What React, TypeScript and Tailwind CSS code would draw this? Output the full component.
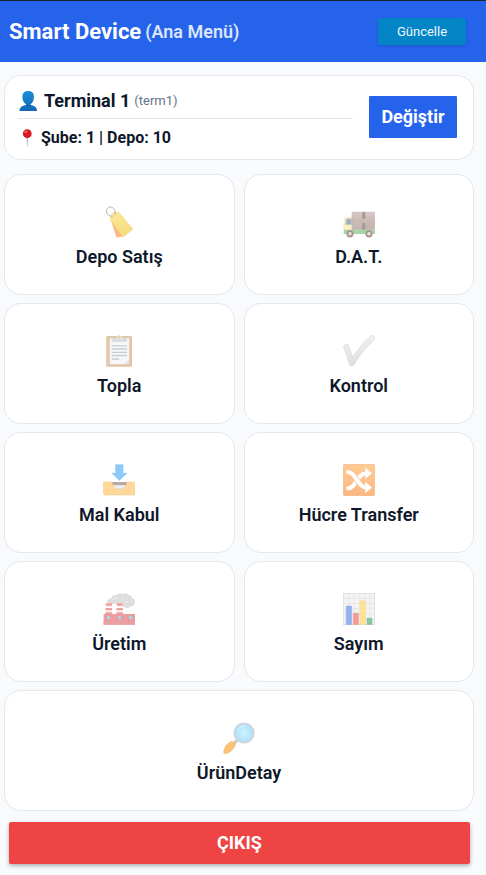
import type { ReactNode } from "react";

function Icon({ children, className = "h-8 w-8" }: { children: ReactNode; className?: string }) {
  return (
    <svg viewBox="0 0 32 32" className={`${className} shrink-0`} fill="none" aria-hidden="true">
      {children}
    </svg>
  );
}

const TagIcon = () => (
  <Icon>
    <defs>
      <linearGradient id="tag" x1="0" y1="0" x2="0" y2="1">
        <stop stopColor="#fbe794" />
        <stop offset="1" stopColor="#f6db7f" />
      </linearGradient>
    </defs>
    <path d="M7.5 13 13.5 31.5 19.5 30.5 16 20Z" fill="#fbb983" />
    <path d="M7 12.5 8.8 8Q9.5 6.8 11 6.6L14.5 6.3Q16 6.3 17 7.5L30 23.2 20.2 31 7.6 14.5Q7 13.5 7 12.5Z" fill="url(#tag)" stroke="#f1d58b" strokeWidth=".5" />
    <circle cx="10.5" cy="9.7" r="1.1" fill="#fff5ca" />
    <path d="M10.3 10C6 10.8 3.2 8 3.5 4.8 3.8 1.3 7.5-.3 10.2 2c2.3 2 2.6 5.2 1.2 7.5" stroke="#b8aaa3" strokeWidth=".9" />
  </Icon>
);

const TruckIcon = () => (
  <Icon>
    <defs>
      <linearGradient id="cargo" x1="0" y1="0" x2="0" y2="1">
        <stop stopColor="#d8cac7" />
        <stop offset=".45" stopColor="#cabbb7" />
        <stop offset="1" stopColor="#c5b5b1" />
      </linearGradient>
    </defs>
    <path d="M.7 23.5H32V28H.7Z" fill="#a4d7a7" />
    <path d="M.8 23.5V18.5L2.4 11.5H9V23.5Z" fill="#fff0bf" stroke="#e8dab1" strokeWidth=".5" />
    <path d="M3.6 13H8.3V18.5H2.8Z" fill="#9dafb9" stroke="#b6c4cb" strokeWidth=".8" />
    <path d="M9 6.2H31.8V23.5H9Z" fill="url(#cargo)" stroke="#bdaea9" strokeWidth=".5" />
    <path d="M19.3 6.2H22.2V12.8H19.3ZM19.3 17H22.2V23.5H19.3Z" fill="#a79692" />
    <circle cx="7" cy="27.8" r="3.6" fill="#a9928d" />
    <circle cx="7" cy="27.8" r="1.8" fill="#e5e3e3" />
    <circle cx="26" cy="27.8" r="3.6" fill="#a9928d" />
    <circle cx="26" cy="27.8" r="1.8" fill="#e5e3e3" />
  </Icon>
);

const ClipboardIcon = () => (
  <Icon>
    <rect x="3.2" y="1" width="25.8" height="30.7" rx="1.4" fill="#dfc3a4" />
    <rect x="4.5" y="2" width="23.2" height="28.5" rx="1" fill="#e7ccb0" />
    <path d="M7 3.5H26V24.5L22 29H7Z" fill="#f5f7f8" />
    <path d="M26 24.5 22 29H26Z" fill="#e1e3e4" />
    <path d="M8.8 3H24V7H8.8Z" fill="#d8dcdf" />
    <path d="M13 3.5Q14 3 14.4 1.4 15 0 16.4 0T18.5 1.4Q18.8 3 20 3.5V4H13Z" fill="#e5e6e7" />
    <circle cx="16.4" cy="2.5" r="1.1" fill="#e6b997" />
    <path d="M8.8 10.8H24M8.8 14H24M8.8 17.3H24M8.8 20.5H24M8.8 24H16" stroke="#c9ccce" strokeWidth="1.3" />
  </Icon>
);

const CheckIcon = () => (
  <Icon>
    <defs>
      <linearGradient id="check" x1="0" y1="0" x2="0" y2="32" gradientUnits="userSpaceOnUse">
        <stop stopColor="#f0f0f0" />
        <stop offset="1" stopColor="#dedede" />
      </linearGradient>
    </defs>
    <path d="M3.3 12 9 28.2C14 19 21 11 29.3 3" stroke="#d8d8d8" strokeWidth="5.8" strokeLinecap="round" strokeLinejoin="round" />
    <path d="M3.3 12 9 28.2C14 19 21 11 29.3 3" stroke="url(#check)" strokeWidth="5" strokeLinecap="round" strokeLinejoin="round" />
  </Icon>
);

const InboxIcon = () => (
  <Icon>
    <path d="M12.6.7H20V9.2H23.8L16.3 16.4 9 9.2H12.6Z" fill="#8bcafa" stroke="#7dbdf0" strokeWidth=".5" />
    <path d="M7 18H26V27H7Z" fill="#baa7a2" />
    <path d="M9 21H24V26H9Z" fill="#e2e4e6" />
    <path d="M9 23H24" stroke="#f7f7f7" />
    <path d="M1 18H9Q10 25.5 16.5 25.5T24 18H31.3Q32 18 32 19V30Q32 31 31 31H1.5Q.5 31 .5 30V18.8Q.5 18 1 18Z" fill="#ffd89a" stroke="#edc58b" strokeWidth=".5" />
  </Icon>
);

const ShuffleIcon = () => (
  <Icon>
    <defs>
      <linearGradient id="shuffle" x1="0" y1="0" x2="0" y2="1">
        <stop stopColor="#ffcb94" />
        <stop offset="1" stopColor="#fbb782" />
      </linearGradient>
    </defs>
    <rect x=".3" y=".3" width="31.4" height="31.4" rx="1.8" fill="url(#shuffle)" stroke="#edb080" strokeWidth=".6" />
    <path d="M3.5 24.2H5.5C13 24.2 14 9.2 23.5 9.2" stroke="#fff" strokeWidth="4" />
    <path d="M22.3 3.5 29 9.2 22.3 14.8Z" fill="#fff" />
    <path d="M3.5 8H5C12.5 8 14.5 23.5 23.5 23.5" stroke="#f9bd86" strokeWidth="5.2" />
    <path d="M3.5 8H5C12.5 8 14.5 23.5 23.5 23.5" stroke="#fff" strokeWidth="4" />
    <path d="M22.3 17.8 29 23.5 22.3 29.2Z" fill="#fff" />
  </Icon>
);

const FactoryIcon = () => (
  <Icon>
    <path d="M4.2 10.2Q3.7 6.2 8.2 5.4 8.5 1.5 13.5 2 16-.4 19.5 1 23-.8 26 2.2 29 2 29.2 5.1 33 6.4 31.8 10 31.4 13.4 27.5 13.4 24.2 16.8 20.7 13.8 16.5 15.2 15 11.5 12.5 9.8 10 11.2Z" fill="#dededf" />
    <path d="M9.5 6.5Q12 4.5 14.5 6M19 10.5Q22 8 25 9.5" stroke="#e8e8e8" strokeWidth="1.2" />
    <path d="M3 10.2H8.7L9.3 21.5H2.3ZM14 10.2H19.3L20 21.5H13.3Z" fill="#fff2f1" />
    <path d="M2.6 10.2H9V12.8H2.6ZM2.6 15H9.1V17.2H2.6ZM2.3 19.2H9.3V21.5H2.3ZM13.7 10.2H19.6V12.8H13.7ZM13.5 15H19.8V17.2H13.5ZM13.3 19.2H20V21.5H13.3Z" fill="#eda09e" />
    <path d="M.6 21H32V31.7H.6Z" fill="#ed9d9e" />
    <path d="M.6 29H32V31.7H.6Z" fill="#e8a1a0" />
    <path d="M4 23H7V26.3H4ZM14.8 23H18V26.3H14.8ZM26 23H29.2V26.3H26Z" fill="#a5def9" stroke="#c4a3aa" strokeWidth=".4" />
  </Icon>
);

const ChartIcon = () => (
  <Icon>
    <rect x=".4" y=".4" width="31.2" height="31.2" fill="#f4f4f4" stroke="#dddddd" strokeWidth=".8" />
    <path d="M.5 5.3H31.5M.5 10.5H31.5M.5 15.7H31.5M.5 21H31.5M.5 26.3H31.5M5.8.5V31.5M11.3.5V31.5M16.5.5V31.5M21.7.5V31.5M27 .5V31.5" stroke="#e2e2e2" strokeWidth=".7" />
    <path d="M3.2 13H8.6V31.6H3.2Z" fill="#91b2ef" stroke="#86a9e9" strokeWidth=".5" />
    <path d="M10.3 20.2H15.4V31.6H10.3Z" fill="#f69b94" stroke="#ec9189" strokeWidth=".5" />
    <path d="M17.2 7.8H22.4V31.6H17.2Z" fill="#ffe391" stroke="#f1d68a" strokeWidth=".5" />
    <path d="M24 25.2H29V31.6H24Z" fill="#89c79d" stroke="#80bd94" strokeWidth=".5" />
  </Icon>
);

const MagnifierIcon = () => (
  <Icon>
    <defs>
      <radialGradient id="lens">
        <stop stopColor="#d0f1ff" />
        <stop offset="1" stopColor="#abe0fb" />
      </radialGradient>
    </defs>
    <path d="M11 21.5 14.5 17.8" stroke="#c3c8cb" strokeWidth="3" />
    <path d="M.7 30.5C.2 26 5 19.7 9.5 19.3L12.6 22.2C11.8 26.5 5.5 32.2 1.8 31.6Q.8 31.4.7 30.5Z" fill="#fbc279" stroke="#eeb773" strokeWidth=".5" />
    <circle cx="21.1" cy="11" r="9.7" fill="url(#lens)" stroke="#d2d5d7" strokeWidth="1.8" />
    <path d="M15 8Q17 4 21 4" stroke="#e4f8ff" strokeLinecap="round" />
  </Icon>
);

const PersonIcon = () => (
  <Icon className="h-5 w-5">
    <defs>
      <linearGradient id="person" x1="0" y1="0" x2="0" y2="32" gradientUnits="userSpaceOnUse">
        <stop stopColor="#168ed9" />
        <stop offset="1" stopColor="#1568b3" />
      </linearGradient>
    </defs>
    <path d="M16.5 0Q25.5 0 25.5 9 25.5 18 20 21V22.5C27 24 30.5 26 30.5 32H2.5C2.5 26 6 24 13 22.5V21Q7 18 7 9T16.5 0Z" fill="url(#person)" />
    <path d="M13 21.5Q16.5 23.5 20 21.5V23Q16.5 25 13 23Z" fill="#145c9d" />
  </Icon>
);

const PinIcon = () => (
  <Icon className="h-[18px] w-[18px]">
    <path d="M15.2 13H17.8L16.9 31H16Z" fill="#a8b0b5" />
    <circle cx="16.5" cy="8.3" r="7.8" fill="#d71920" />
    <ellipse cx="14" cy="5" rx="2.8" ry="2.1" fill="#f16861" />
  </Icon>
);

const menu = [
  { label: "Depo Satış", Glyph: TagIcon },
  { label: "D.A.T.", Glyph: TruckIcon },
  { label: "Topla", Glyph: ClipboardIcon },
  { label: "Kontrol", Glyph: CheckIcon },
  { label: "Mal Kabul", Glyph: InboxIcon },
  { label: "Hücre Transfer", Glyph: ShuffleIcon },
  { label: "Üretim", Glyph: FactoryIcon },
  { label: "Sayım", Glyph: ChartIcon },
  { label: "ÜrünDetay", Glyph: MagnifierIcon },
];

export default function App() {
  return (
    <div className="min-h-screen bg-[#f8fafc] font-[Roboto,sans-serif] text-[#0f172a]">
      <header className="flex h-[62px] items-center justify-between border-t border-[#20232c] bg-[#2563eb] pr-5 pl-[9px]">
        <h1 className="flex items-center gap-1 text-[22px] leading-7 font-bold text-white">
          Smart Device
          <span className="text-lg font-semibold text-[#dbe5fb]">(Ana Menü)</span>
        </h1>
        <button type="button" className="h-[27px] w-[88px] rounded-[3px] bg-[#0284c7] text-[13px] text-[#f0f9ff] shadow-sm">
          Güncelle
        </button>
      </header>

      <main className="pt-[13px] pr-3 pb-[11px] pl-1">
        <section className="flex items-center gap-4 rounded-[17px] border border-[#e2e8f0] bg-white pt-[11px] pr-4 pb-3 pl-[13px]">
          <div className="min-w-0 flex-1">
            <div className="flex h-8 items-center border-b border-[#e2e8f0] pb-1">
              <PersonIcon />
              <strong className="ml-[6px] text-lg leading-6 font-bold">Terminal 1</strong>
              <span className="ml-1 text-[13px] text-[#64748b]">(term1)</span>
            </div>
            <div className="flex h-7 items-center pt-[10px]">
              <PinIcon />
              <strong className="ml-[5px] text-base leading-5 font-bold">Şube: 1 | Depo: 10</strong>
            </div>
          </div>
          <button type="button" className="h-[42px] w-[88px] rounded-[1px] bg-[#2563eb] text-lg font-bold text-white">
            Değiştir
          </button>
        </section>

        <nav className="mt-[14px] grid grid-cols-2 gap-x-[9px] gap-y-2" aria-label="Ana Menü">
          {menu.map(({ label, Glyph }) => (
            <button
              key={label}
              type="button"
              className="flex h-[121px] flex-col items-center justify-center gap-[7px] rounded-[17px] border border-[#e2e8f0] bg-white pt-[5px] last:col-span-2"
            >
              <Glyph />
              <span className="text-lg leading-6 font-semibold">{label}</span>
            </button>
          ))}
        </nav>

        <div className="pt-[11px] pr-1 pl-[5px]">
          <button type="button" className="h-[42px] w-full rounded-[2px] bg-[#ef4444] text-lg font-bold text-white shadow-[0_2px_4px_rgba(0,0,0,0.3)]">
            ÇIKIŞ
          </button>
        </div>
      </main>
    </div>
  );
}
